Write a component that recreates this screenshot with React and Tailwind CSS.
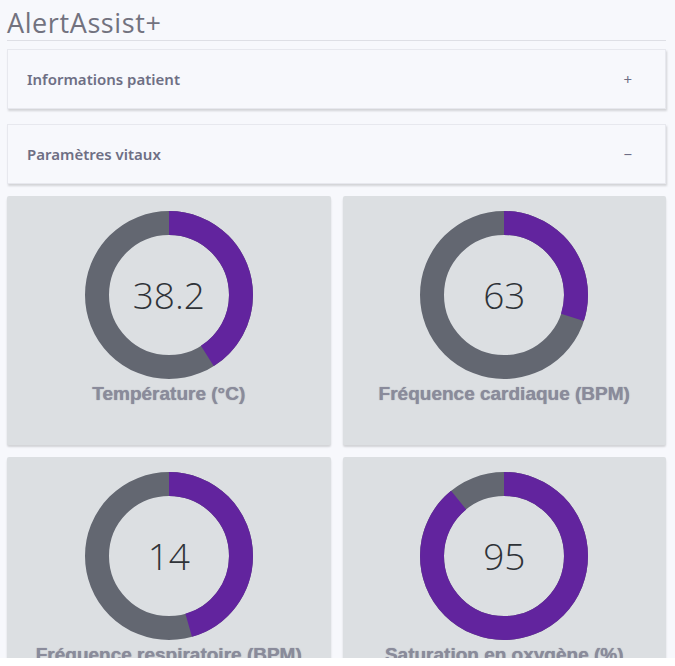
import React from 'react';

const vitals = [
  { value: '38.2', label: 'Température (°C)', pct: 0.41 },
  { value: '63', label: 'Fréquence cardiaque (BPM)', pct: 0.3 },
  { value: '14', label: 'Fréquence respiratoire (BPM)', pct: 0.455 },
  { value: '95', label: 'Saturation en oxygène (%)', pct: 0.89 },
];

function Donut({ pct, value }) {
  const r = 72;
  const c = 2 * Math.PI * r;
  return (
    <div className="relative w-[168px] h-[168px]">
      <svg width="168" height="168" viewBox="0 0 168 168" className="-rotate-90">
        <circle cx="84" cy="84" r={r} fill="none" stroke="#636771" strokeWidth="24" />
        <circle
          cx="84"
          cy="84"
          r={r}
          fill="none"
          stroke="#62249e"
          strokeWidth="24"
          strokeDasharray={`${c * pct} ${c}`}
        />
      </svg>
      <div className="absolute inset-0 flex items-center justify-center text-[37px] text-[#2f3338] font-['Open_Sans',sans-serif] font-light">
        {value}
      </div>
    </div>
  );
}

function Panel({ title, sign }) {
  return (
    <div className="flex items-center justify-between h-[60px] pl-[19px] pr-[33px] bg-[#f7f8fc] border border-[#e7e8ee] shadow-[1px_2px_2px_rgba(0,0,0,0.15)]">
      <span className="text-[15px] font-semibold text-[#6e6f84] font-['Noto_Sans',sans-serif]">{title}</span>
      <span className="text-[15px] text-[#6e6e86] font-['Noto_Sans',sans-serif]">{sign}</span>
    </div>
  );
}

export default function App() {
  return (
    <div className="bg-white h-[666px]">
      <div className="h-[658px] overflow-hidden bg-[#f7f8fc] pl-[7px] pr-[9px]">
        <h1 className="h-[41px] pt-[7px] text-[27px] leading-[32px] tracking-[0.6px] text-[#72727f] font-['Open_Sans',sans-serif] font-normal border-b border-[#dedfe5]">
          AlertAssist+
        </h1>
        <div className="flex flex-col gap-[15px] mt-[8px]">
          <Panel title="Informations patient" sign="+" />
          <Panel title="Paramètres vitaux" sign="−" />
        </div>
        <div className="grid grid-cols-2 gap-[12px] mt-[12px]">
          {vitals.map((v) => (
            <div
              key={v.label}
              className="h-[249px] bg-[#dcdfe2] rounded-[2px] shadow-[0_2px_2px_rgba(0,0,0,0.15)] flex flex-col items-center pt-[15px]"
            >
              <Donut pct={v.pct} value={v.value} />
              <div className="mt-[1px] text-[19px] font-bold text-[#8a8b9b] font-['Liberation_Sans',sans-serif] [text-shadow:0_0_1px_rgba(60,60,80,0.5)]">
                {v.label}
              </div>
            </div>
          ))}
        </div>
      </div>
    </div>
  );
}
